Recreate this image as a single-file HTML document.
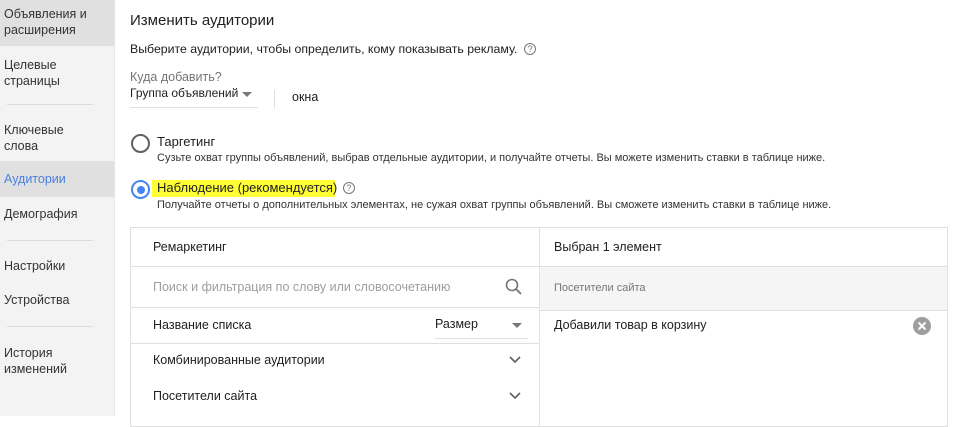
<!DOCTYPE html>
<html><head><meta charset="utf-8"><style>
*{margin:0;padding:0;box-sizing:border-box}
body{width:960px;height:416px;overflow:hidden;background:#fff;font-family:"Liberation Sans",sans-serif;color:#212121;position:relative}
.a{position:absolute;white-space:nowrap}
#side{position:absolute;left:0;top:0;width:115px;height:416px;background:#f3f3f3;border-right:1px solid #e6e6e6}
.si{position:absolute;left:4px;font-size:12.5px;line-height:16px;color:#333}
.hr{position:absolute;left:7px;width:86px;height:1px;background:#dcdcdc}
.ln{position:absolute;background:#e0e0e0}
.sm{font-size:11px;color:#333}
.q{display:inline-block;width:12px;height:12px;border:1px solid #777;border-radius:50%;font-size:9px;line-height:10px;text-align:center;color:#777;vertical-align:1px}
</style></head><body>
<div id="side">
<div style="position:absolute;left:0;top:0;width:114px;height:46px;background:#e0e0e0"></div>
<div class="si" style="top:6px">Объявления и<br>расширения</div>
<div class="si" style="top:57px">Целевые<br>страницы</div>
<div class="hr" style="top:104px"></div>
<div class="si" style="top:122px">Ключевые<br>слова</div>
<div style="position:absolute;left:0;top:161px;width:114px;height:36px;background:#e0e0e0"></div>
<div class="si" style="top:171px;color:#4a7fe0">Аудитории</div>
<div class="si" style="top:206px">Демография</div>
<div class="hr" style="top:240px"></div>
<div class="si" style="top:258px">Настройки</div>
<div class="si" style="top:292px">Устройства</div>
<div class="hr" style="top:326px"></div>
<div class="si" style="top:345px">История<br>изменений</div>
</div>

<div class="a" style="left:130px;top:12px;font-size:15px">Изменить аудитории</div>
<div class="a" style="left:130px;top:42px;font-size:12.3px">Выберите аудитории, чтобы определить, кому показывать рекламу. &nbsp;<span class="q">?</span></div>
<div class="a" style="left:130px;top:70px;font-size:12.5px;color:#757575">Куда добавить?</div>
<div class="a" style="left:130px;top:86px;font-size:12px">Группа объявлений</div>
<div class="a" style="left:242px;top:92px;width:0;height:0;border-left:5px solid transparent;border-right:5px solid transparent;border-top:5px solid #777"></div>
<div class="ln" style="left:130px;top:107px;width:128px;height:1px"></div>
<div class="ln" style="left:274px;top:90px;width:1px;height:19px"></div>
<div class="a" style="left:292px;top:90px;font-size:12.5px">окна</div>

<div class="a" style="left:131px;top:134px;width:19px;height:19px;border:2px solid #616161;border-radius:50%"></div>
<div class="a" style="left:157px;top:134px;font-size:13px">Таргетинг</div>
<div class="a sm" style="left:157px;top:152px">Сузьте охват группы объявлений, выбрав отдельные аудитории, и получайте отчеты. Вы можете изменить ставки в таблице ниже.</div>
<div class="a" style="left:131px;top:180px;width:19px;height:19px;border:2px solid #4285f4;border-radius:50%"><div style="position:absolute;left:3.5px;top:3.5px;width:8px;height:8px;border-radius:50%;background:#4285f4"></div></div>
<div class="a" style="left:152px;top:180px;height:17px;width:183px;background:#ffff33"></div>
<div class="a" style="left:157px;top:180px;font-size:13px">Наблюдение (рекомендуется) <span class="q" style="margin-left:2px">?</span></div>
<div class="a sm" style="left:157px;top:199px">Получайте отчеты о дополнительных элементах, не сужая охват группы объявлений. Вы сможете изменить ставки в таблице ниже.</div>

<div class="a" style="left:130px;top:227px;width:818px;height:200px;border:1px solid #e0e0e0"></div>
<div class="ln" style="left:539px;top:227px;width:1px;height:200px"></div>
<div class="ln" style="left:130px;top:266px;width:818px;height:1px"></div>
<div class="a" style="left:540px;top:267px;width:407px;height:43px;background:#f5f5f5"></div>
<div class="ln" style="left:540px;top:310px;width:408px;height:1px"></div>
<div class="ln" style="left:130px;top:307px;width:410px;height:1px"></div>
<div class="ln" style="left:130px;top:343px;width:410px;height:1px"></div>
<div class="a" style="left:153px;top:240px;font-size:12.5px">Ремаркетинг</div>
<div class="a" style="left:153px;top:280px;font-size:12.5px;color:#9e9e9e">Поиск и фильтрация по слову или словосочетанию</div>
<svg class="a" style="left:504px;top:277px" width="20" height="20" viewBox="0 0 20 20"><circle cx="8" cy="8" r="5.5" fill="none" stroke="#757575" stroke-width="1.6"/><path d="M12 12l5 5" stroke="#757575" stroke-width="1.8"/></svg>
<div class="a" style="left:153px;top:318px;font-size:12.5px">Название списка</div>
<div class="a" style="left:435px;top:317px;font-size:12.5px">Размер</div>
<div class="a" style="left:512px;top:323px;width:0;height:0;border-left:5px solid transparent;border-right:5px solid transparent;border-top:5px solid #777"></div>
<div class="ln" style="left:435px;top:338px;width:93px;height:1px"></div>
<div class="a" style="left:153px;top:353px;font-size:12.5px">Комбинированные аудитории</div>
<div class="a" style="left:153px;top:389px;font-size:12.5px">Посетители сайта</div>
<svg class="a" style="left:508px;top:355px" width="14" height="10"><path d="M2 2l5 5 5-5" fill="none" stroke="#616161" stroke-width="1.6"/></svg>
<svg class="a" style="left:508px;top:391px" width="14" height="10"><path d="M2 2l5 5 5-5" fill="none" stroke="#616161" stroke-width="1.6"/></svg>
<div class="a" style="left:554px;top:240px;font-size:12.5px">Выбран 1 элемент</div>
<div class="a" style="left:554px;top:282px;font-size:11px;color:#757575">Посетители сайта</div>
<div class="a" style="left:554px;top:318px;font-size:12.5px">Добавили товар в корзину</div>
<svg class="a" style="left:913px;top:317px" width="18" height="18"><circle cx="9" cy="9" r="9" fill="#9e9e9e"/><path d="M5.5 5.5l7 7M12.5 5.5l-7 7" stroke="#fff" stroke-width="2"/></svg>
</body></html>
